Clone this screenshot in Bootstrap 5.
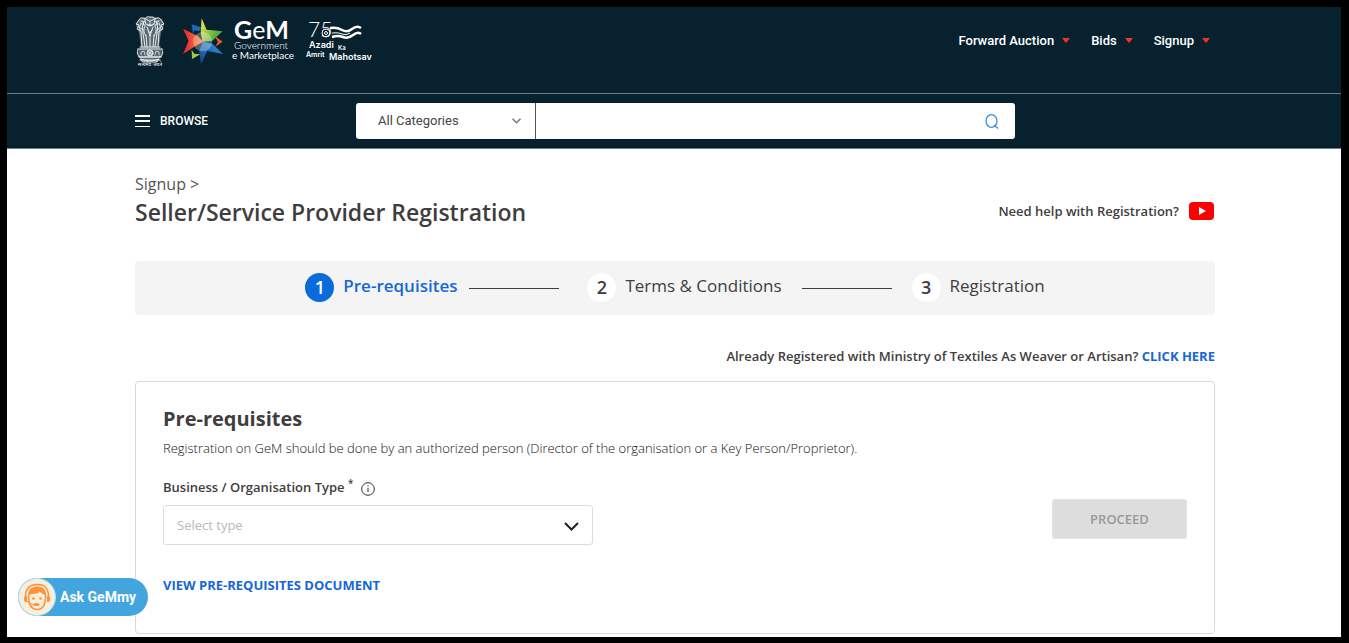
<!DOCTYPE html>
<html lang="en">
<head>
<meta charset="utf-8">
<meta name="viewport" content="width=device-width, initial-scale=1">
<title>GeM | Seller/Service Provider Registration</title>
<link href="https://cdn.jsdelivr.net/npm/bootstrap@5.3.0/dist/css/bootstrap.min.css" rel="stylesheet">
<style>
:root { --ink: #3f3d40; --navy: #08212e; --link: #1567d8; --rule: #dcdcdc; }
body {
  min-height: 100vh; color: var(--ink); background: #fff;
  font: 13px/20px "Open Sans", sans-serif;
  border: solid #000; border-width: 7px 8px 6px 7px;
}
a { color: var(--link); text-decoration: none; }
.wrap { max-width: 1082px; padding: 0 0 0 2px; margin: 0 auto; }
.site-head { background: var(--navy); font-family: Roboto, sans-serif; border-bottom: 1px solid #6f7c82; }
.brand-bar { border-bottom: 1px solid #6f8089; }
.brand-row { height: 86px; padding-top: 8px; }
.top-menu a { color: #fff; font-weight: 500; }
.top-menu { gap: 21px; padding: 16px 5px 0 0; }
.top-menu a::after {
  content: ""; display: inline-block; margin-left: 8px; vertical-align: 2px;
  border: 4px solid transparent; border-top: 5px solid #fb3123; border-bottom: 0;
}
.browse-row { height: 54px; }
.browse-btn { width: 221px; color: #fff; font: 500 12px/20px Roboto, sans-serif; gap: 10px; }
.search-box { width: 659px; height: 36px; border-radius: 3px; background: #fff; }
.search-box select {
  width: 180px; border: 0; border-right: 1px solid #555; appearance: none; color: #444;
  padding: 0 22px; background: transparent; font: 13px/20px Roboto, sans-serif;
}
.cat-pick svg { right: 15px; top: 15px; pointer-events: none; }
.search-box input { border: 0; outline: 0; background: transparent; min-width: 0; padding: 0 12px; }
.search-box button { width: 46px; }
.crumb { font-size: 16px; line-height: 23px; color: #555; }
.page-title { font-size: 23px; line-height: 32px; font-weight: 600; }
.semi { font-weight: 600; }
.help-link { padding-bottom: 7px; }
.stepper { background: #f4f4f4; border-radius: 4px; height: 54px; font-size: 17px; margin-top: 33px; padding: 0 0 2px; }
.step-no { width: 29px; height: 29px; border-radius: 50%; background: #fff; font-size: 18px; font-weight: 600; margin-right: 9px; }
.step-label { padding-bottom: 2px; }
.now .step-no { background: #0a6cdb; color: #fff; }
.now .step-label { color: var(--link); font-weight: 600; }
.step-rule { width: 90px; height: 1px; background: var(--ink); margin: 2px 20px 0; }
.now + .step-rule { margin: 2px 28px 0 12px; }
.weaver { margin: 31px 0 15px; }
.panel { border: 1px solid #d9d9d9; border-radius: 4px; padding: 23px 27px 38px; margin-bottom: 3px; }
.panel h2 { font-size: 20px; line-height: 28px; font-weight: 700; margin: 0 0 5px; }
.panel .intro { font-weight: 300; color: #111; margin-bottom: 19px; }
.type-field { width: 430px; }
.type-field select {
  height: 40px; border: 1px solid var(--rule); border-radius: 3px; appearance: none;
  color: #b9b9b9; padding: 0 13px; background: #fff;
}
.pick svg { right: 14px; top: 17px; pointer-events: none; }
.proceed { width: 135px; height: 40px; border: 1px solid #e2e2e2; border-radius: 3px; background: #ddd; color: #999; font-weight: 600; margin-bottom: 6px; }
.doc-link { margin-top: 30px; }
.ask { left: 18px; bottom: 27px; height: 38px; width: 130px; border: 0; border-radius: 19px; padding: 0; background: #42a5e0; color: #fff; font: 700 14px/20px Roboto, sans-serif; gap: 4px; }
</style>
</head>
<body>
<header class="site-head">
  <div class="brand-bar">
    <div class="wrap brand-row d-flex justify-content-between align-items-start">
      <a href="#" class="d-block" aria-label="Government e Marketplace">
        <svg width="242" height="54" viewBox="0 0 242 54" class="d-block" fill="#fff">
          <defs>
            <linearGradient id="gr" x1="0" x2="1"><stop stop-color="#e8202a"/><stop offset="1" stop-color="#f58a4b"/></linearGradient>
            <linearGradient id="gg" x1="0" y1="0" x2="1" y2=".7"><stop stop-color="#fff04a"/><stop offset=".6" stop-color="#82bd3f"/><stop offset="1" stop-color="#27a54a"/></linearGradient>
            <linearGradient id="gb" x1="0" y1="1" x2="1" y2="0"><stop stop-color="#173f8f"/><stop offset="1" stop-color="#2d9be0"/></linearGradient>
          </defs>
          <!-- Lion capital -->
          <path d="M10 2l10 0 7 2 2 6-3 8-2 14 2 3 1 4-2 4-3 4H8l-3-4-2-4 1-4 2-3L4 18 1 10l3-6z" opacity=".32"/>
          <g fill="none" stroke="#e5eaec" stroke-width="1" stroke-linecap="round" stroke-linejoin="round">
            <path d="M10 4q1-3 5-2q4-1 5 2l-1 5q-4 4-8 0zM10 4Q6 1 4 5L1 9l3 1-2 4 4 2M20 4q4-3 6 1l3 4-3 1 2 4-4 2M6 8q-3 5 0 9M24 8q3 5 0 9M11 4l3 2M19 4l-3 2M15 5v4l-1 1h2M12 9q3 3 6 0"/>
            <path d="M9 6q-3 6-1 12M21 6q3 6 1 12M10 11q-3 5 1 10M20 11q3 5-1 10M12 12q1 4 3 6q2-2 3-6M13 15l2 6 2-6M6 17l1 15M8 18l2 14M11 20l1 12M19 20l-1 12M22 18l-2 14M24 17l-1 15M15 20v12M4 12l4 3M26 12l-4 3"/>
            <path d="M5 32h20M3 34h24M3 34q-2 4 1 8h22q3-4 1-8M4 42h22M6 44q9 4 18 0l-2 3H8z"/>
            <circle cx="15" cy="38" r="3"/><path d="M15 35v6M12 38h6M13 36l4 4M17 36l-4 4M6 40v-3l3-1 1 4M24 40v-3l-3-1-1 4" stroke-width=".8"/>
            <path d="M6 6l3 1-2 2 3 1M24 6l-3 1 2 2-3 1M5 45h20" stroke-width="1.500" opacity=".7"/>
          </g>
          <text x="15" y="51" font-size="5" text-anchor="middle" font-family="Noto Sans, sans-serif">सत्यमेव जयते</text>
          <!-- Star mark -->
          <svg x="47" y="2" width="42" height="48" viewBox="186 48 126 144">
            <path d="M215 70l28 9-5 12-15-3-4 10z" fill="#176cc0"/>
            <path d="M189 83l44 22 17 17-22 12-39 25 17-39z" fill="url(#gr)"/>
            <path d="M245 52l15 34 48 5-31 28-29 3-6-28z" fill="url(#gg)"/>
            <path d="M248 122l30 7 31 30-47-9-19 40-5-40z" fill="url(#gb)"/>
            <path d="M284 105l24 17-23 15 9-14z" fill="#f15a29"/>
            <path d="M215 146l8 12 18 2-25 14z" fill="#a3cc39"/>
            <circle cx="248" cy="122" r="29" fill="#fff" opacity=".3"/>
          </svg>
          <g font-family="Lato, sans-serif">
            <text x="99" y="24" font-size="25" font-weight="700">G<tspan font-weight="400">e</tspan>M</text>
            <text x="99" y="34" font-size="10" font-weight="300">Government</text>
            <text x="97" y="44" font-size="10" font-weight="400">e Marketplace</text>
          </g>
          <!-- Azadi Ka Amrit Mahotsav -->
          <text x="173" y="22" font-size="21" font-weight="300" font-family="Lato, sans-serif">75</text>
          <g fill="none" stroke="#fff">
            <circle cx="191" cy="18" r="4"/><circle cx="191" cy="18" r="1.500"/>
            <path d="M195 13q7-1 12 2t10-1 9-1" stroke-width="2.500"/>
            <path d="M197 22q6-2 11 0t10-2 8-1" stroke-width="2.500"/>
            <path d="M197 18q6-1 10 1t8-1" stroke-width="1"/>
          </g>
          <g font-family="Inter, sans-serif" font-weight="600">
            <text x="174" y="33" font-size="9">Azadi</text><text x="203" y="35" font-size="6">Ka</text>
            <text x="171" y="42" font-size="7">Amrit</text><text x="194" y="45" font-size="9">Mahotsav</text>
          </g>
        </svg>
      </a>
      <nav class="top-menu d-flex" aria-label="Main">
        <a href="#">Forward Auction</a><a href="#">Bids</a><a href="#">Signup</a>
      </nav>
    </div>
  </div>
  <div class="wrap browse-row d-flex align-items-center">
    <button type="button" class="browse-btn btn p-0 border-0 d-flex align-items-center">
      <svg width="15" height="12" viewBox="0 0 15 12" fill="#fff"><path d="M0 0h15v2H0zM0 5h15v2H0zM0 11h15v1H0z"/></svg>BROWSE
    </button>
    <form class="search-box d-flex" role="search">
      <div class="cat-pick position-relative d-flex">
        <select aria-label="Category"><option>All Categories</option></select>
        <svg class="position-absolute" width="9" height="6" viewBox="0 0 9 6" fill="none" stroke="#777" stroke-width="1.500"><path d="M.5.8l4 4 4-4"/></svg>
      </div>
      <input type="text" class="flex-grow-1" aria-label="Search">
      <button type="button" class="btn p-0 border-0" aria-label="Search">
        <svg width="14" height="16" viewBox="0 0 14 16" fill="none" stroke="#3b8fdc" stroke-width="1.300"><ellipse cx="6.500" cy="7" rx="5.500" ry="6.300"/><path d="M9 11l4 3.500"/></svg>
      </button>
    </form>
  </div>
</header>
<main class="wrap">
  <div class="d-flex justify-content-between align-items-end">
    <div class="pt-4">
      <a href="#" class="crumb d-block">Signup &gt;</a>
      <h1 class="page-title m-0">Seller/Service Provider Registration</h1>
    </div>
    <a href="#" class="help-link semi text-reset d-flex align-items-center">Need help with Registration?
      <svg class="ms-2" width="28" height="18" viewBox="0 0 28 18"><rect x="2" width="25" height="18" rx="4" fill="red"/><path d="M12 5l7 4-7 4z" fill="#fff"/></svg>
    </a>
  </div>
  <div class="stepper d-flex align-items-center justify-content-center">
    <div class="now d-flex align-items-center"><span class="step-no d-flex align-items-center justify-content-center">1</span><span class="step-label">Pre-requisites</span></div>
    <span class="step-rule"></span>
    <div class="d-flex align-items-center"><span class="step-no d-flex align-items-center justify-content-center">2</span><span class="step-label">Terms &amp; Conditions</span></div>
    <span class="step-rule"></span>
    <div class="d-flex align-items-center"><span class="step-no d-flex align-items-center justify-content-center">3</span><span class="step-label">Registration</span></div>
  </div>
  <p class="weaver semi text-end">Already Registered with Ministry of Textiles As Weaver or Artisan? <a href="#" class="fw-bold">CLICK HERE</a></p>
  <section class="panel">
    <h2>Pre-requisites</h2>
    <p class="intro">Registration on GeM should be done by an authorized person (Director of the organisation or a Key Person/Proprietor).</p>
    <div class="d-flex justify-content-between align-items-end">
      <div class="type-field">
        <div class="d-flex align-items-center mb-2">
          <label for="org" class="semi">Business / Organisation Type <sup>*</sup></label>
          <svg class="ms-2 mt-1" width="14" height="14" viewBox="0 0 14 14" fill="none" stroke="#333"><circle cx="7" cy="7" r="6.300"/><path d="M7 6v4M7 3.500v1.200"/></svg>
        </div>
        <div class="pick position-relative">
          <select id="org" class="w-100"><option>Select type</option></select>
          <svg class="position-absolute" width="15" height="10" viewBox="0 0 15 10" fill="none" stroke="#222" stroke-width="2"><path d="M1 1l6.500 6.500L14 1"/></svg>
        </div>
      </div>
      <button type="button" class="proceed" disabled>PROCEED</button>
    </div>
    <a href="#" class="doc-link fw-bold d-inline-block">VIEW PRE-REQUISITES DOCUMENT</a>
  </section>
</main>
<button type="button" class="ask position-fixed d-flex align-items-center">
  <svg width="38" height="38" viewBox="0 0 38 38">
    <circle cx="19" cy="19" r="18.500" fill="#f6efdd" stroke="#b9dced"/>
    <path d="M7.500 20Q7 7 19 6.500T30.500 20" fill="none" stroke="#ff9138" stroke-width="1.500"/>
    <path d="M10.500 18q0 13 8.500 13.500T27.500 18" fill="#f6efdd" stroke="#ff9138" stroke-width="1.500"/>
    <path d="M10 20q-1-11 9-11.500T28 20q-1-4-5-5-1-1-1-2-1 3-8 3-3 0-4 4z" fill="#ff9138"/>
    <path d="M9 18v6H8q-2 0-2-2v-2q0-2 3-2zM29 18v6h1q2 0 2-2v-2q0-2-3-2z" fill="#ff9138"/>
    <circle cx="15.500" cy="20.500" r="1.300" fill="#ff9138"/><circle cx="22.500" cy="20.500" r="1.300" fill="#ff9138"/>
    <path d="M9 23q2 3.500 7 3.500" fill="none" stroke="#ff9138"/><ellipse cx="18.500" cy="26.500" rx="3" ry="1.500" fill="#ff9138"/>
  </svg>Ask GeMmy
</button>
<script src="https://cdn.jsdelivr.net/npm/bootstrap@5.3.0/dist/js/bootstrap.bundle.min.js"></script>
</body>
</html>
